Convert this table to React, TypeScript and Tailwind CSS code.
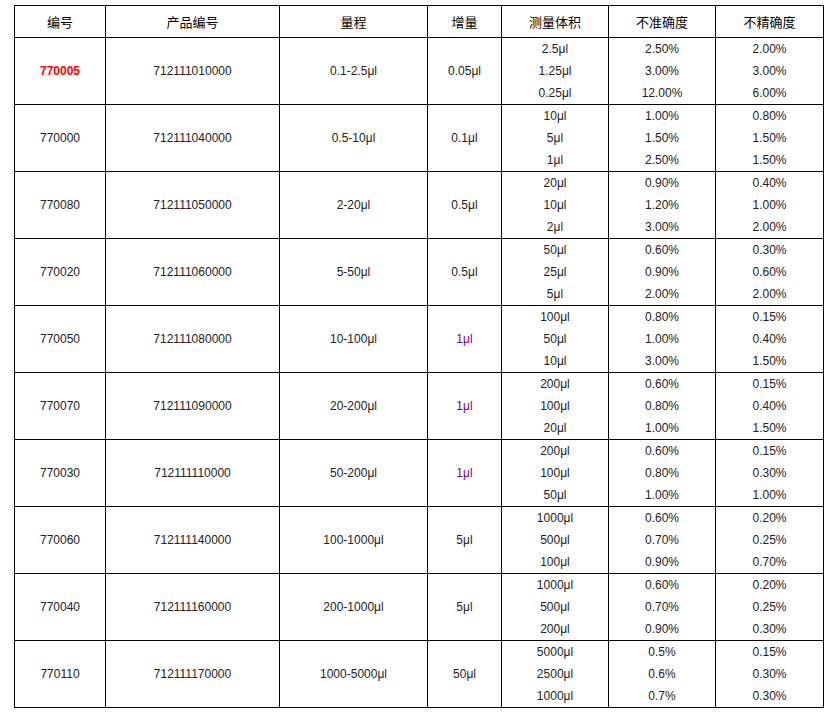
import React from "react";

type Row = {
  id: string;
  code: string;
  range: string;
  inc: string;
  incPurple?: boolean;
  vols: string[];
  acc: string[];
  prec: string[];
  red?: boolean;
};

const rows: Row[] = [
  { id: "770005", code: "712111010000", range: "0.1-2.5μl", inc: "0.05μl", vols: ["2.5μl", "1.25μl", "0.25μl"], acc: ["2.50%", "3.00%", "12.00%"], prec: ["2.00%", "3.00%", "6.00%"], red: true },
  { id: "770000", code: "712111040000", range: "0.5-10μl", inc: "0.1μl", vols: ["10μl", "5μl", "1μl"], acc: ["1.00%", "1.50%", "2.50%"], prec: ["0.80%", "1.50%", "1.50%"] },
  { id: "770080", code: "712111050000", range: "2-20μl", inc: "0.5μl", vols: ["20μl", "10μl", "2μl"], acc: ["0.90%", "1.20%", "3.00%"], prec: ["0.40%", "1.00%", "2.00%"] },
  { id: "770020", code: "712111060000", range: "5-50μl", inc: "0.5μl", vols: ["50μl", "25μl", "5μl"], acc: ["0.60%", "0.90%", "2.00%"], prec: ["0.30%", "0.60%", "2.00%"] },
  { id: "770050", code: "712111080000", range: "10-100μl", inc: "1μl", incPurple: true, vols: ["100μl", "50μl", "10μl"], acc: ["0.80%", "1.00%", "3.00%"], prec: ["0.15%", "0.40%", "1.50%"] },
  { id: "770070", code: "712111090000", range: "20-200μl", inc: "1μl", incPurple: true, vols: ["200μl", "100μl", "20μl"], acc: ["0.60%", "0.80%", "1.00%"], prec: ["0.15%", "0.40%", "1.50%"] },
  { id: "770030", code: "712111110000", range: "50-200μl", inc: "1μl", incPurple: true, vols: ["200μl", "100μl", "50μl"], acc: ["0.60%", "0.80%", "1.00%"], prec: ["0.15%", "0.30%", "1.00%"] },
  { id: "770060", code: "712111140000", range: "100-1000μl", inc: "5μl", vols: ["1000μl", "500μl", "100μl"], acc: ["0.60%", "0.70%", "0.90%"], prec: ["0.20%", "0.25%", "0.70%"] },
  { id: "770040", code: "712111160000", range: "200-1000μl", inc: "5μl", vols: ["1000μl", "500μl", "200μl"], acc: ["0.60%", "0.70%", "0.90%"], prec: ["0.20%", "0.25%", "0.30%"] },
  { id: "770110", code: "712111170000", range: "1000-5000μl", inc: "50μl", vols: ["5000μl", "2500μl", "1000μl"], acc: ["0.5%", "0.6%", "0.7%"], prec: ["0.15%", "0.30%", "0.30%"] },
];

const headers = ["编号", "产品编号", "量程", "增量", "测量体积", "不准确度", "不精确度"];

function Stack({ items }: { items: string[] }) {
  return (
    <div className="flex flex-col items-center">
      {items.map((t, i) => (
        <div key={i} className="leading-[22px] h-[22px]">
          {t}
        </div>
      ))}
    </div>
  );
}

export default function App() {
  const cell = "border border-black text-center align-middle p-0";
  return (
    <div
      className="bg-white w-[832px] h-[719px] pt-[5px] pl-[14px] text-[12px] text-[#222]"
      style={{ fontFamily: '"Liberation Sans", Arial, "Noto Sans CJK SC", sans-serif' }}
    >
      <table className="table-fixed border-collapse w-[810px]">
        <colgroup>
          <col className="w-[91px]" />
          <col className="w-[174px]" />
          <col className="w-[148px]" />
          <col className="w-[74px]" />
          <col className="w-[107px]" />
          <col className="w-[107px]" />
          <col className="w-[108px]" />
        </colgroup>
        <thead>
          <tr className="h-[32px]">
            {headers.map((h) => (
              <th
                key={h}
                className={`${cell} font-normal text-[13px] text-black`}
                style={{ fontFamily: '"Noto Sans CJK SC", sans-serif' }}
              >
                {h}
              </th>
            ))}
          </tr>
        </thead>
        <tbody>
          {rows.map((r) => (
            <tr key={r.id} className="h-[67px]">
              <td className={`${cell} ${r.red ? "text-[#ff0000] font-bold" : ""}`}>{r.id}</td>
              <td className={cell}>{r.code}</td>
              <td className={cell}>{r.range}</td>
              <td className={`${cell} ${r.incPurple ? "text-[#800080]" : ""}`}>{r.inc}</td>
              <td className={cell}>
                <Stack items={r.vols} />
              </td>
              <td className={cell}>
                <Stack items={r.acc} />
              </td>
              <td className={cell}>
                <Stack items={r.prec} />
              </td>
            </tr>
          ))}
        </tbody>
      </table>
    </div>
  );
}
